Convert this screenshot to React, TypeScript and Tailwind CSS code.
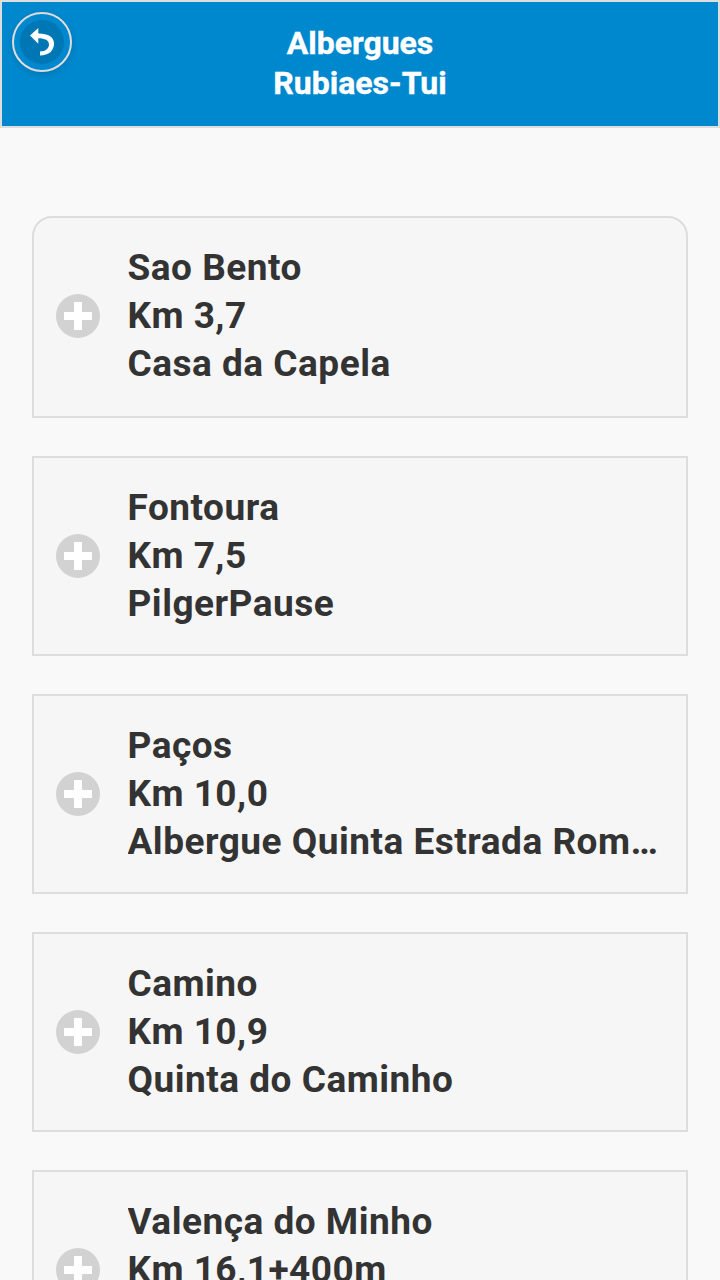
import React from 'react';

const hostels = [
  { place: 'Sao Bento', km: 'Km 3,7', name: 'Casa da Capela' },
  { place: 'Fontoura', km: 'Km 7,5', name: 'PilgerPause' },
  { place: 'Paços', km: 'Km 10,0', name: 'Albergue Quinta Estrada Romana' },
  { place: 'Camino', km: 'Km 10,9', name: 'Quinta do Caminho' },
  { place: 'Valença do Minho', km: 'Km 16,1+400m', name: 'Albergue' },
];

function PlusIcon() {
  return (
    <svg className="size-11 shrink-0" viewBox="0 0 44 44">
      <circle cx="22" cy="22" r="22" fill="#d2d2d2" />
      <path d="M18 8h8v10h10v8H26v10h-8V26H8v-8h10z" fill="#fff" />
    </svg>
  );
}

export default function App() {
  return (
    <div className="h-[1280px] overflow-hidden bg-[#f9f9f9] font-[Roboto,sans-serif] font-bold">
      <header className="relative h-32 border-2 border-[#dddddd] bg-[#0088ce] pt-[21px] text-center text-[32px] leading-10 text-white">
        <h1 className="[-webkit-text-stroke:0.4px_white]">
          Albergues
          <br />
          Rubiaes-Tui
        </h1>
        <button
          className="absolute left-[10px] top-[10px] size-[60px] rounded-full shadow-[0_2px_6px_rgba(0,0,0,0.15)]"
          aria-label="Back"
        >
          <svg viewBox="0 0 60 60" className="size-full">
            <circle cx="30" cy="30" r="29" fill="#0088ce" stroke="#dddddd" strokeWidth="2" />
            <circle cx="30" cy="30" r="22" fill="#0077b5" />
            <path d="M18 23.500L26.300 16v5.600C36 21.500 42 25 42 31.500C42 38.500 37 43.500 28 43.500v-4C34 39.500 37 36 37 32.500C37 28.500 33 26.300 26.300 26.300v5.400z" fill="#fff" />
          </svg>
        </button>
      </header>
      <main className="flex flex-col gap-[38px] px-8 pt-[88px]">
        {hostels.map((h) => (
          <button
            key={h.place}
            className="flex h-[200px] w-full shrink-0 items-center gap-[27.5px] border-2 border-[#dddddd] bg-[#f6f6f6] pl-[22px] pr-7 text-left text-[37px] leading-[48px] tracking-[0.5px] text-[#333333] first:h-[202px] first:rounded-t-[20px] first:pb-[2px]"
          >
            <PlusIcon />
            <div className="min-w-0 flex-1">
              <p className="truncate">{h.place}</p>
              <p className="truncate">{h.km}</p>
              <p className="truncate">{h.name}</p>
            </div>
          </button>
        ))}
      </main>
    </div>
  );
}
